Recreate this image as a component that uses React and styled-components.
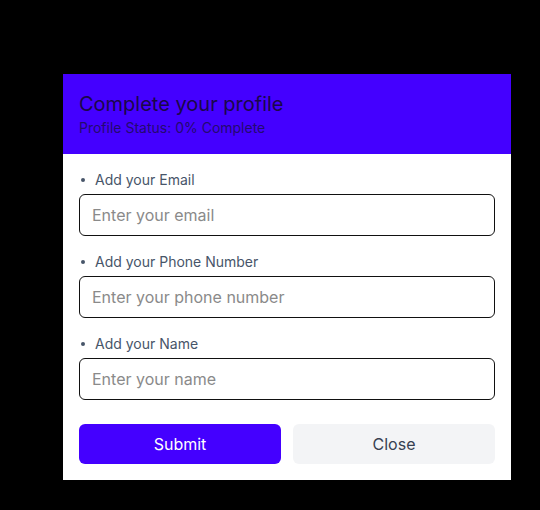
import React from 'react';
import styled, { createGlobalStyle } from 'styled-components';

const GlobalStyle = createGlobalStyle`
  html, body {
    margin: 0;
    padding: 0;
    background: #000;
    font-family: Inter, "Noto Sans", sans-serif;
  }
  * {
    box-sizing: border-box;
  }
`;

const Page = styled.div`
  width: 540px;
  height: 510px;
  background: #000;
  padding: 74px 29px 0 63px;
`;

const Card = styled.div`
  width: 448px;
  background: #fff;
`;

const Header = styled.div`
  height: 80px;
  background: #4400ff;
  padding: 18px 16px 0;
`;

const Title = styled.h2`
  margin: 0;
  font-size: 20px;
  font-weight: 400;
  line-height: 24px;
  color: #1a0848;
`;

const Status = styled.p`
  margin: 2px 0 0;
  font-size: 14px;
  line-height: 20px;
  color: #240a70;
`;

const Body = styled.form`
  padding: 16px;
  display: flex;
  flex-direction: column;
`;

const Field = styled.div`
  display: flex;
  flex-direction: column;
  margin-bottom: 16px;
`;

const Label = styled.label`
  display: flex;
  align-items: center;
  font-size: 14px;
  line-height: 20px;
  color: #475569;
  margin-bottom: 4px;

  &::before {
    content: '';
    width: 4px;
    height: 4px;
    border-radius: 50%;
    background: #475569;
    margin: 0 10px 0 2px;
  }
`;

const Input = styled.input`
  height: 42px;
  border: 1px solid #111;
  border-radius: 6px;
  padding: 0 12px;
  font-family: inherit;
  font-size: 16px;
  color: #111;
  outline: none;

  &::placeholder {
    color: #8a8a8a;
  }
`;

const Actions = styled.div`
  display: grid;
  grid-template-columns: 1fr 1fr;
  gap: 12px;
  margin-top: 8px;
`;

const Button = styled.button`
  height: 40px;
  border: none;
  border-radius: 6px;
  font-family: inherit;
  font-size: 16px;
  background: ${props => (props.primary ? '#4400ff' : '#f3f4f6')};
  color: ${props => (props.primary ? '#fff' : '#374151')};
  cursor: pointer;
`;

const fields = [
  { label: 'Add your Email', placeholder: 'Enter your email', type: 'email' },
  { label: 'Add your Phone Number', placeholder: 'Enter your phone number', type: 'tel' },
  { label: 'Add your Name', placeholder: 'Enter your name', type: 'text' }
];

const App = () => {
  return (
    <>
      <GlobalStyle />
      <Page>
        <Card>
          <Header>
            <Title>Complete your profile</Title>
            <Status>Profile Status: 0% Complete</Status>
          </Header>
          <Body onSubmit={e => e.preventDefault()}>
            {fields.map(f => (
              <Field key={f.label}>
                <Label>{f.label}</Label>
                <Input type={f.type} placeholder={f.placeholder} />
              </Field>
            ))}
            <Actions>
              <Button primary type="submit">Submit</Button>
              <Button type="button">Close</Button>
            </Actions>
          </Body>
        </Card>
      </Page>
    </>
  );
};

export default App;
